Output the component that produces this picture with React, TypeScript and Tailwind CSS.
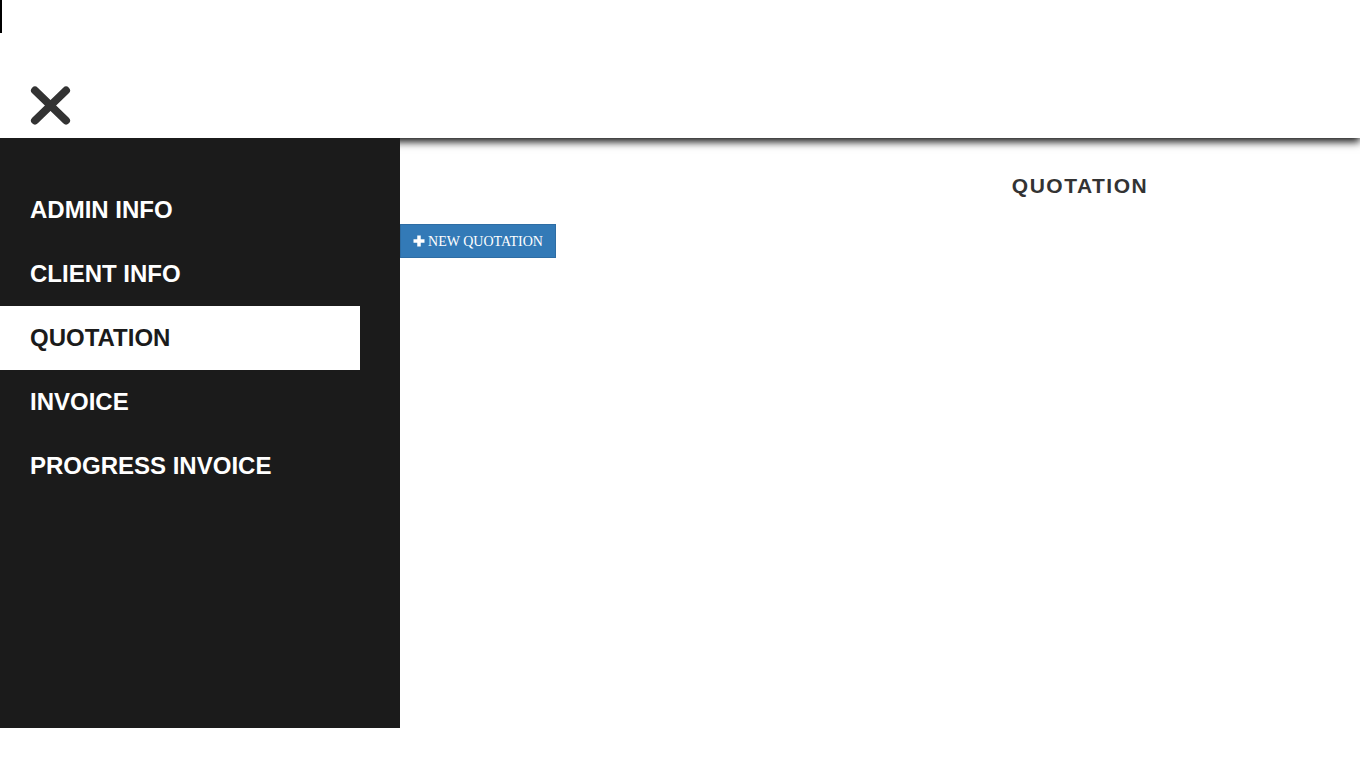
import React from "react";

const MENU = ["ADMIN INFO", "CLIENT INFO", "QUOTATION", "INVOICE", "PROGRESS INVOICE"];

export default function App() {
  const active = "QUOTATION";

  return (
    <div className="min-h-[768px] bg-white font-['Liberation_Sans',Arial,sans-serif]">
      {/* Header */}
      <header className="relative h-[138px] bg-white shadow-[0_4px_8px_rgba(0,0,0,0.9)]">
        <div className="absolute left-0 top-0 h-[33px] w-[2px] bg-black" />
        <button type="button" aria-label="Close menu" className="absolute left-[30px] top-[85px] size-[41px]">
          <svg viewBox="0 0 41 40" className="size-full">
            <path d="M5 5 L36 35 M36 5 L5 35" stroke="#333" strokeWidth="8" strokeLinecap="round" fill="none" />
          </svg>
        </button>
      </header>

      <div className="flex">
        {/* Sidebar */}
        <aside className="relative z-10 h-[590px] w-[400px] bg-[#1b1b1b] pt-10">
          <nav className="flex flex-col">
            {MENU.map((item) => (
              <a
                key={item}
                href="#"
                className={`flex h-16 w-[360px] items-center pl-[30px] text-[24px] font-bold ${
                  item === active ? "bg-white text-[#1b1b1b]" : "text-white"
                }`}
              >
                {item}
              </a>
            ))}
          </nav>
        </aside>

        {/* Main */}
        <main className="flex-1">
          <div className="pl-[400px] pt-[34px] text-center">
            <h2 className="text-[21px] font-bold leading-[28px] tracking-[1.5px] text-[#333]">QUOTATION</h2>
          </div>
          <button
            type="button"
            className="mt-[24px] flex h-[34px] w-[156px] items-center justify-center gap-[3px] border border-[#2e6da4] bg-[#337ab7] font-['Liberation_Serif','Times_New_Roman',serif] text-[14px] text-white"
          >
            <svg viewBox="0 0 12 12" className="size-[12px]">
              <path d="M6 0.5 V11.5 M0.5 6 H11.5" stroke="#fff" strokeWidth="3.5" fill="none" />
            </svg>
            <span>NEW QUOTATION</span>
          </button>
        </main>
      </div>
    </div>
  );
}
